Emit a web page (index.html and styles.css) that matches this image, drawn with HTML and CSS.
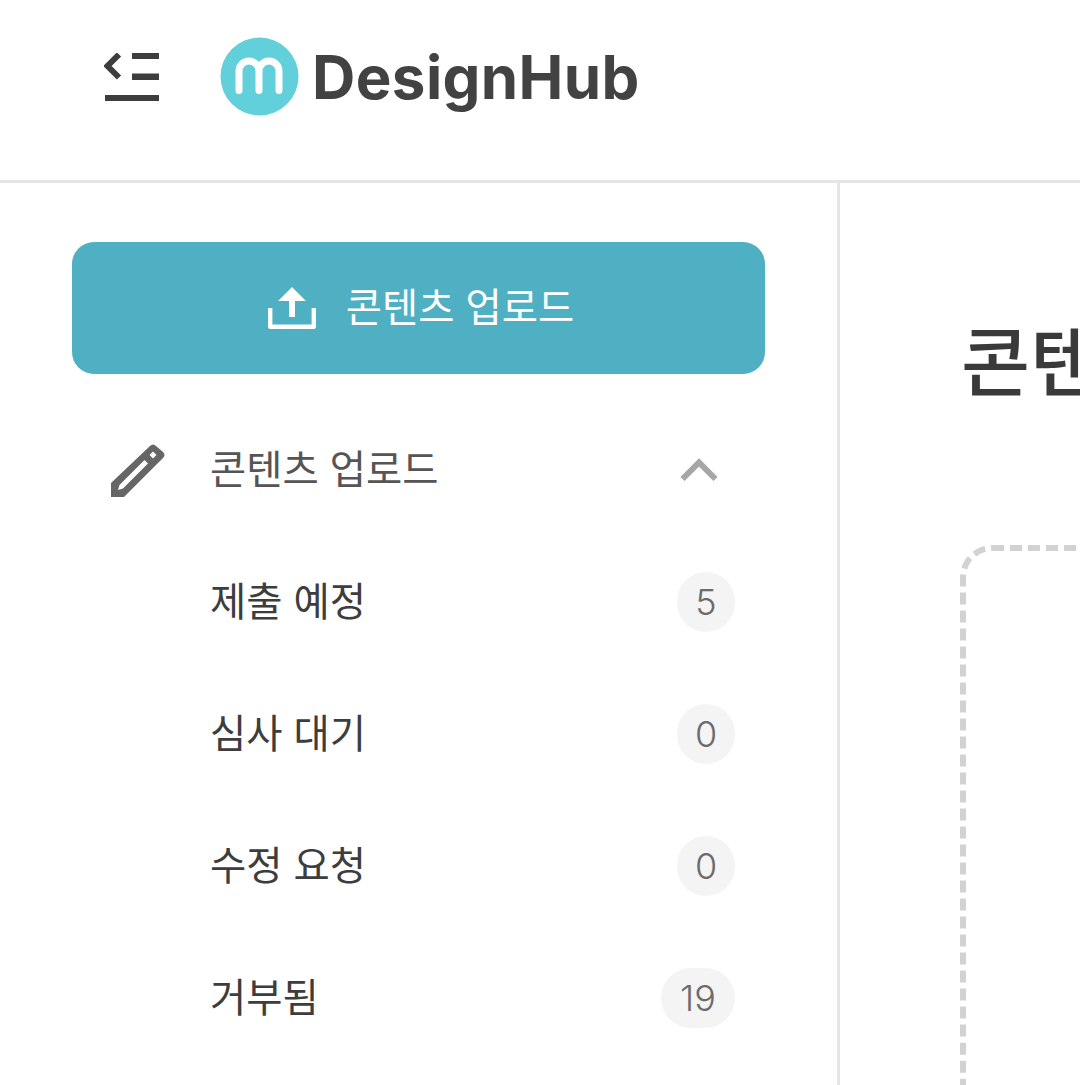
FILE: index.html
```html
<!DOCTYPE html>
<html lang="ko">
<head>
<meta charset="UTF-8">
<meta name="viewport" content="width=device-width, initial-scale=1.0">
<title>DesignHub</title>
<link rel="stylesheet" href="styles.css">
</head>
<body>

<header class="topbar">
    <svg class="menu-icon" width="56" height="48" viewBox="0 0 56 48">
        <path d="M15 1.500 L3.500 13 L15 24.500" fill="none" stroke="#3d3d3d" stroke-width="6"/>
        <rect x="28" y="0" width="27" height="6" fill="#3d3d3d"/>
        <rect x="28" y="20.500" width="27" height="6.500" fill="#3d3d3d"/>
        <rect x="1" y="42" width="54" height="6" fill="#3d3d3d"/>
    </svg>
    <svg class="logo-mark" width="80" height="80" viewBox="0 0 80 80">
        <circle cx="39.500" cy="39.500" r="39" fill="#62d0da"/>
        <path d="M19 53.500 V34 A10 10 0 0 1 39 34 V53.500 M39 34 A10 10 0 0 1 59 34 V53.500" fill="none" stroke="#fff" stroke-width="7" stroke-linecap="round"/>
    </svg>
    <span class="logo-text">DesignHub</span>
</header>

<div class="layout">
    <aside class="sidebar">
        <button class="upload-btn">
            <svg width="48" height="42" viewBox="0 0 48 42">
                <path d="M2.200 21 V39.800 H45.800 V21" fill="none" stroke="#fff" stroke-width="4.400" stroke-linejoin="round"/>
                <path d="M24 0 L38 14 H27 V30 H21 V14 H10 Z" fill="#fff"/>
            </svg>
            <span class="label">콘텐츠 업로드</span>
        </button>

        <div class="nav-head">
            <svg class="pencil" width="56" height="56" viewBox="0 0 56 56">
                <path d="M40 3 Q43 0 46 3 L53 9 Q56 12 53 15 L14 54 H1 V40 Z" fill="#666"/>
                <path d="M34.500 17 L38 20.500 L13 45.500 L8 47 L9.500 42 Z" fill="#fff"/>
                <path d="M43 8.500 L46.500 12 L43 15.500 L39.500 12 Z" fill="#fff"/>
            </svg>
            <span class="label">콘텐츠 업로드</span>
            <svg class="chevron" width="38" height="24" viewBox="0 0 38 24">
                <path d="M2.500 21 L19 4.500 L35.500 21" fill="none" stroke="#a6a6a6" stroke-width="6"/>
            </svg>
        </div>

        <div class="nav-item"><span class="label">제출 예정</span><span class="count">5</span></div>
        <div class="nav-item"><span class="label">심사 대기</span><span class="count">0</span></div>
        <div class="nav-item"><span class="label">수정 요청</span><span class="count">0</span></div>
        <div class="nav-item"><span class="label">거부됨</span><span class="count count-wide">19</span></div>
    </aside>

    <main class="content">
        <h1>콘텐츠 업로드</h1>
        <div class="dropzone"></div>
    </main>
</div>

</body>
</html>
```

FILE: styles.css
```css
body {
    margin: 0;
    width: 1080px;
    height: 1085px;
    overflow: hidden;
    background-color: #fff;
    font-family: "Noto Sans CJK KR", "Noto Sans", sans-serif;
    color: #3d3d3d;
}

.topbar {
    display: flex;
    align-items: center;
    height: 154px;
    padding: 0 0 26px 104px;
    border-bottom: 3px solid #e5e5e5;
}

.menu-icon {
    margin-right: 60px;
}

.logo-mark {
    margin-right: 12px;
}

.logo-text {
    font-family: Inter, sans-serif;
    font-size: 60px;
    font-weight: 700;
    letter-spacing: 0.4px;
    color: #424242;
}

.layout {
    display: flex;
    height: 902px;
}

.sidebar {
    flex: none;
    width: 840px;
    box-sizing: border-box;
    padding: 59px 72px 0;
    border-right: 3px solid #e5e5e5;
}

.upload-btn {
    display: flex;
    align-items: center;
    justify-content: center;
    gap: 30px;
    width: 693px;
    height: 132px;
    padding: 0 0 0 5px;
    margin-bottom: 30px;
    background-color: #4fafc3;
    color: #fff;
    border: none;
    border-radius: 22px;
    font-family: inherit;
    font-size: 39.400px;
}

.label {
    padding-bottom: 8px;
}

.nav-head,
.nav-item {
    display: flex;
    align-items: center;
    height: 132px;
    font-size: 39.400px;
}

.nav-head {
    position: relative;
    padding-left: 138px;
    color: #555;
}

.pencil {
    position: absolute;
    left: 38px;
    top: 39px;
}

.chevron {
    position: absolute;
    left: 608px;
    top: 54px;
}

.nav-item {
    justify-content: space-between;
    padding: 0 30px 0 138px;
}

.count {
    width: 58px;
    height: 60px;
    box-sizing: border-box;
    border-radius: 30px;
    background-color: #f4f4f4;
    color: #6b6b6b;
    font-family: Inter, sans-serif;
    font-size: 36px;
    font-weight: 300;
    line-height: 60px;
    text-align: center;
}

.count-wide {
    width: 74px;
}

.content {
    flex: 1;
    padding-left: 121px;
    min-width: 0;
}

h1 {
    margin: 132px 0 0;
    font-size: 75px;
    font-weight: 500;
    line-height: 86px;
    white-space: nowrap;
    color: #3a3a3a;
}

.dropzone {
    width: 600px;
    height: 800px;
    margin: 144px 0 0 -1px;
    border: 6px dashed #d2d2d2;
    border-radius: 32px;
}
```
